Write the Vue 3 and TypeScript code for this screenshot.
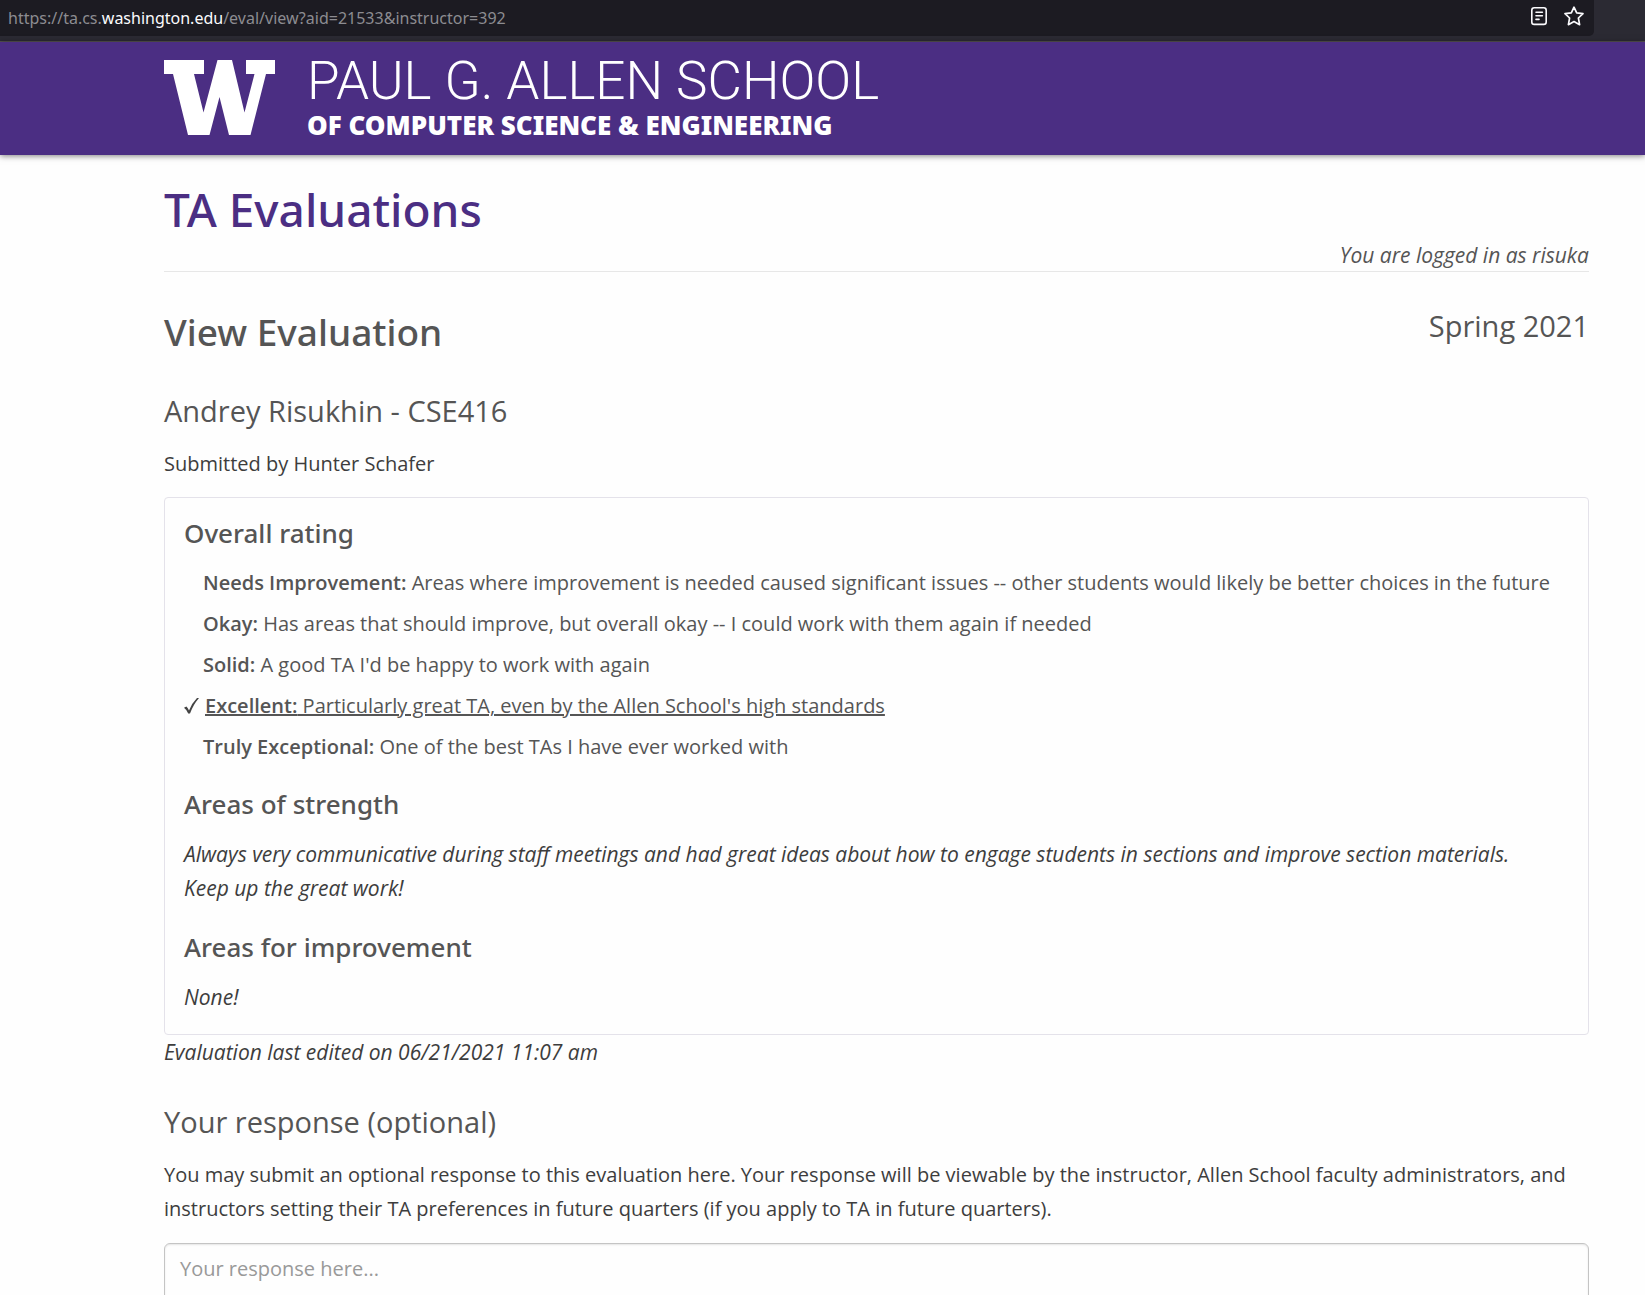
<script setup lang="ts">
import { ref } from 'vue'

interface Rating {
  label: string
  text: string
}

const ratings: Rating[] = [
  {
    label: 'Needs Improvement:',
    text: 'Areas where improvement is needed caused significant issues -- other students would likely be better choices in the future',
  },
  { label: 'Okay:', text: 'Has areas that should improve, but overall okay -- I could work with them again if needed' },
  { label: 'Solid:', text: "A good TA I'd be happy to work with again" },
  { label: 'Excellent:', text: "Particularly great TA, even by the Allen School's high standards" },
  { label: 'Truly Exceptional:', text: 'One of the best TAs I have ever worked with' },
]
const selected = 'Excellent:'
const response = ref('')
</script>

<template>
  <div class="window">
    <div class="toolbar">
      <div class="urlbar">
        <span class="url">https://ta.cs.<span class="host">washington.edu</span>/eval/view?aid=21533&amp;instructor=392</span>
        <button class="tool" type="button" aria-label="Reader view">
          <svg width="20" height="20" viewBox="0 0 20 20" fill="none" stroke="#fbfbfe" stroke-width="1.6" stroke-linecap="round">
            <rect x="2.8" y="1.8" width="14.4" height="16.6" rx="2.4" />
            <path d="M7 6.2h6.4M7 9.800h6.400M7 13.400h3" />
          </svg>
        </button>
        <button class="tool" type="button" aria-label="Bookmark this page">
          <svg width="20" height="20" viewBox="0 0 20 20" fill="none" stroke="#fbfbfe" stroke-width="1.7" stroke-linejoin="round">
            <path d="M10 1.200l2.700 5.700 6.300.8-4.600 4.300 1.200 6.700L10 15.600l-5.600 3.100 1.200-6.700L1 7.700l6.300-.8z" />
          </svg>
        </button>
      </div>
    </div>

    <header class="banner">
      <a class="brand" href="#">
        <svg class="mark" width="111" height="75" viewBox="0 0 111 75" aria-label="W">
          <path fill="#fff" d="M0 0H40V14H30L39.500 52.500 53.500 0H68L80.500 52.500 90.500 14H82V0H111V14H102L86.500 75H65L55.500 37 45.500 75H24L9 14H0z" />
        </svg>
        <span class="wordmark">
          <span class="school">PAUL G. ALLEN SCHOOL</span>
          <span class="dept">OF COMPUTER SCIENCE &amp; ENGINEERING</span>
        </span>
      </a>
    </header>

    <main class="page">
      <h1>TA Evaluations</h1>
      <p class="login">You are logged in as risuka</p>

      <div class="title">
        <h2>View Evaluation</h2>
        <span class="term">Spring 2021</span>
      </div>

      <h3>Andrey Risukhin - CSE416</h3>
      <p class="submitted">Submitted by Hunter Schafer</p>

      <section class="card">
        <h4>Overall rating</h4>
        <ul class="ratings">
          <li v-for="r in ratings" :key="r.label" :class="{ chosen: r.label === selected }">
            <svg v-if="r.label === selected" class="check" width="15" height="16" viewBox="0 0 15 16" aria-label="Selected">
              <path fill="#444" d="M0 9.800L2.400 8.400Q4 10 5 12.400 8 5 13 0H15Q9 7 6 15.600H4.200Q2.600 11.600 0 9.800z" />
            </svg>
            <span class="rating"><b>{{ r.label }}</b> {{ r.text }}</span>
          </li>
        </ul>
        <h4>Areas of strength</h4>
        <p class="comment">
          Always very communicative during staff meetings and had great ideas about how to engage students in sections and
          improve section materials.<br />
          Keep up the great work!
        </p>
        <h4>Areas for improvement</h4>
        <p class="comment">None!</p>
      </section>
      <p class="edited">Evaluation last edited on 06/21/2021 11:07 am</p>

      <h3><label for="response">Your response (optional)</label></h3>
      <p class="help">
        You may submit an optional response to this evaluation here. Your response will be viewable by the instructor, Allen
        School faculty administrators, and instructors setting their TA preferences in future quarters (if you apply to TA in
        future quarters).
      </p>
      <textarea id="response" v-model="response" rows="5" placeholder="Your response here..."></textarea>
    </main>
  </div>
</template>

<style>
body {
  margin: 0;
  background: #fefefe;
}
</style>

<style scoped>
.window {
  display: flex;
  flex-direction: column;
  height: 100vh;
  overflow: hidden;
  color: #3d3d3d;
  font: 20px/34px 'Open Sans', sans-serif;
}

.toolbar {
  flex: none;
  padding: 0 51px 5px 0;
  background: #2b2a33;
  border-bottom: 1px solid #55524f;
}

.urlbar {
  display: flex;
  align-items: center;
  gap: 15px;
  height: 36px;
  padding: 0 10px 4px 8px;
  box-sizing: border-box;
  border-radius: 0 0 5px 0;
  background: #1c1b22;
}

.url {
  flex: 1;
  color: #8c8c91;
  font: 16px/24px 'Noto Sans', sans-serif;
  padding-top: 4px;
}

.host {
  color: #fbfbfe;
}

.tool {
  display: flex;
  padding: 0;
  border: 0;
  background: none;
}

.banner {
  flex: none;
  padding: 18px 164px 20px;
  background: #4b2e83;
  box-shadow: 0 1px 6px rgba(0, 0, 0, 0.5);
}

.brand {
  display: flex;
  gap: 32px;
  height: 75px;
  color: #fff;
  text-decoration: none;
}

.wordmark {
  display: flex;
  flex-direction: column;
  white-space: nowrap;
}

.school {
  font: 300 53px/42px Roboto, sans-serif;
}

.dept {
  padding-top: 8px;
  font: 900 26px/30px 'Noto Sans', sans-serif;
}

.page {
  flex: 1;
  padding: 23px 56px 0 164px;
}

h1,
h2,
h3,
h4,
p,
ul {
  margin: 0;
  padding: 0;
}

h1,
h2,
h3,
h4,
.term,
.login,
.ratings {
  color: #555;
}

h1,
h2,
h4 {
  font-family: 'Noto Sans', sans-serif;
  font-weight: 500;
}

h1 {
  color: #4b2e83;
  font-size: 46px;
  line-height: 62px;
}

.login {
  border-bottom: 1px solid #e7e7e7;
  line-height: 31px;
  text-align: right;
}

.login,
.comment,
.edited {
  font-size: 21px;
  font-style: italic;
}

.title {
  display: flex;
  justify-content: space-between;
  padding: 34px 0 35px;
}

h2 {
  padding-top: 2px;
  font-size: 37px;
  line-height: 48px;
}

.term,
h3 {
  font-size: 29px;
  line-height: 40px;
  font-weight: 400;
}

.submitted {
  margin: 16px 0;
}

.card {
  padding: 17px 19px 20px;
  border: 1px solid #e4e2ea;
  border-radius: 4px;
}

h4 {
  margin-bottom: 15px;
  font-size: 26px;
  line-height: 36px;
}

.ratings {
  margin-bottom: 22px;
  list-style: none;
}

.ratings li {
  display: flex;
  align-items: center;
  margin-bottom: 7px;
  padding-left: 19px;
}

.ratings .chosen {
  gap: 6px;
  padding-left: 0;
}

.chosen .rating {
  text-decoration: underline;
}

b {
  font-weight: 600;
}

.comment + h4 {
  margin-top: 24px;
}

.edited {
  margin-bottom: 33px;
}

.help {
  margin: 16px 0 17px;
}

textarea {
  display: block;
  width: 100%;
  box-sizing: border-box;
  padding: 8px 15px;
  border: 1px solid #c4c4c4;
  border-radius: 6px;
  background: #fefefe;
  box-shadow: inset 0 1px 2px rgba(0, 0, 0, 0.1);
  color: inherit;
  font: inherit;
  resize: none;
}

textarea::placeholder {
  color: #999;
}
</style>
